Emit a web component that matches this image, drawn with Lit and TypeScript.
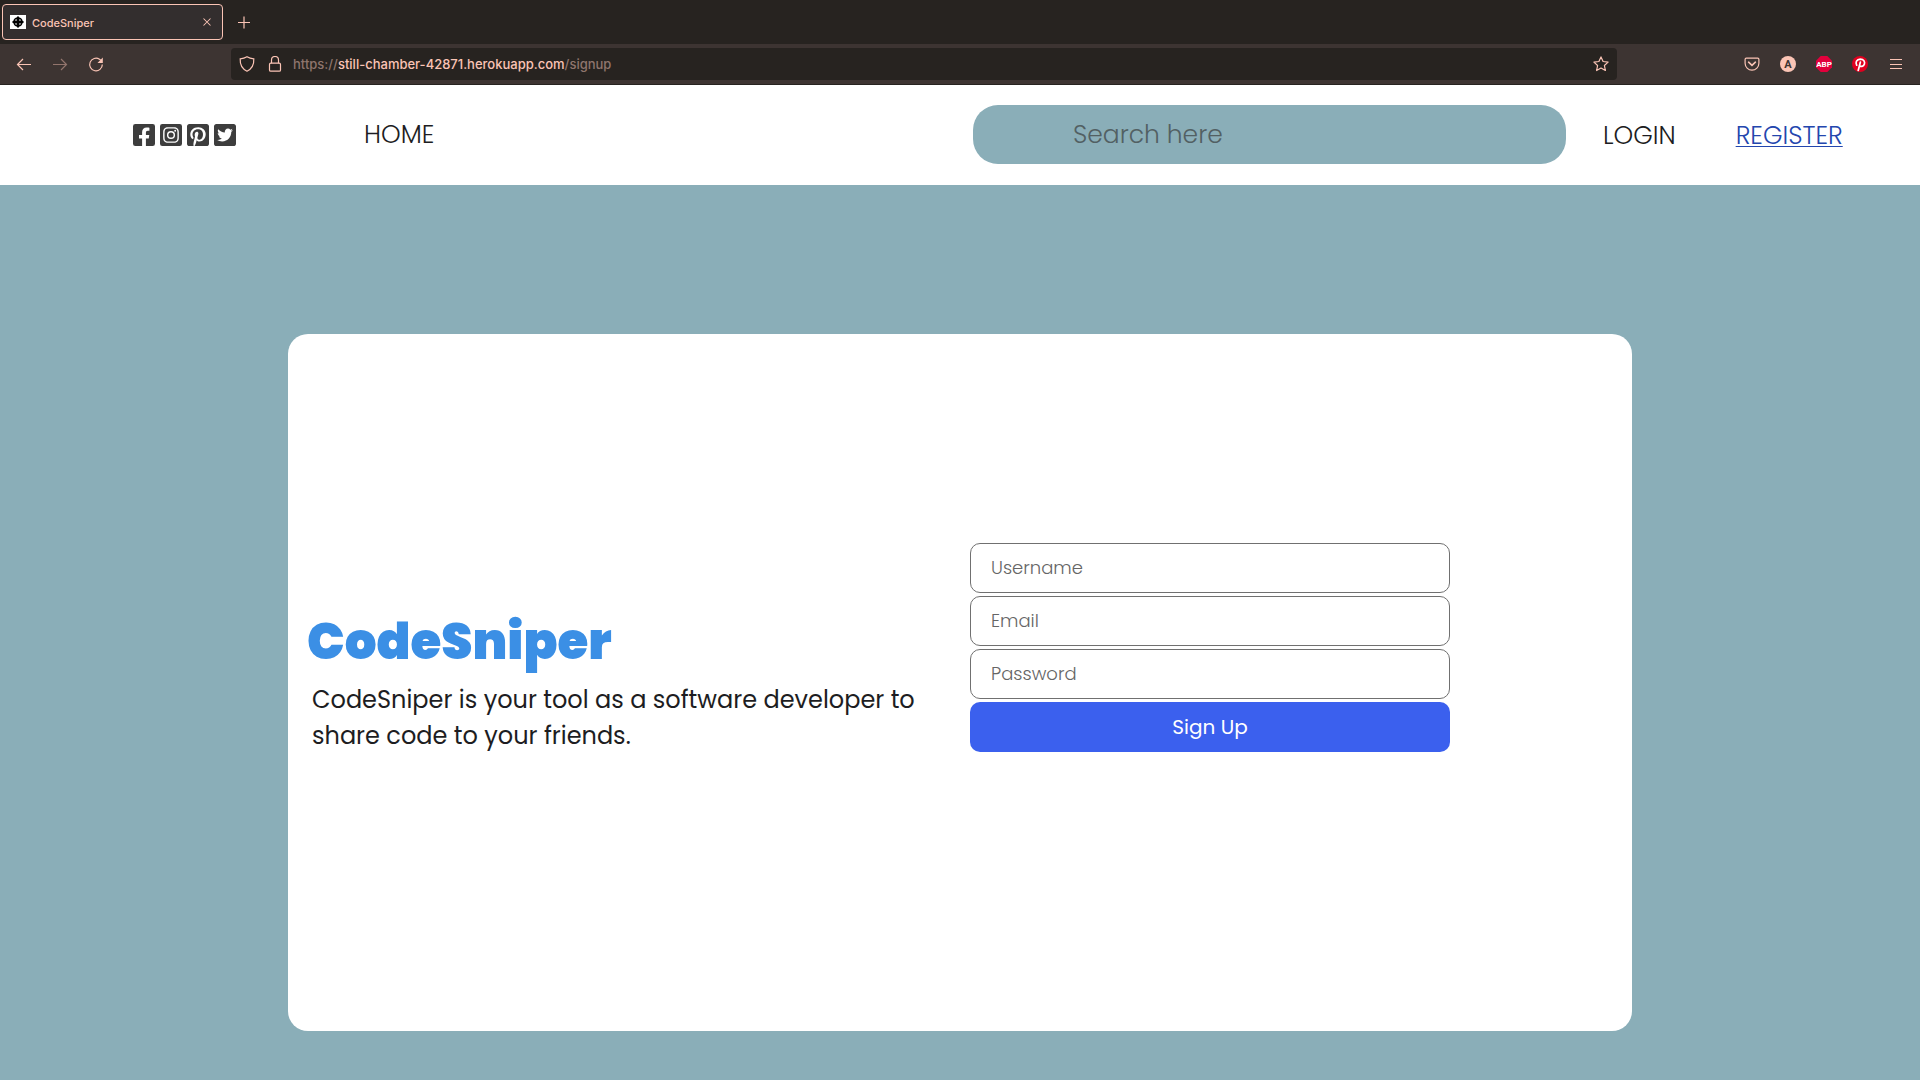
import { LitElement, html, css, svg } from "lit";
import { customElement } from "lit/decorators.js";

const socialIcons = [
  {
    name: "Facebook",
    path: "M400 32H48A48 48 0 0 0 0 80v352a48 48 0 0 0 48 48h137.25V327.69h-63V256h63v-54.64c0-62.15 37-96.48 93.67-96.48 27.14 0 55.52 4.84 55.52 4.84v61h-31.27c-30.81 0-40.42 19.12-40.42 38.73V256h68.78l-11 71.69h-57.78V480H400a48 48 0 0 0 48-48V80a48 48 0 0 0-48-48z",
  },
  {
    name: "Instagram",
    path: "M224,202.66A53.34,53.34,0,1,0,277.36,256,53.38,53.38,0,0,0,224,202.66Zm124.71-41a54,54,0,0,0-30.41-30.41c-21-8.29-71-6.43-94.3-6.43s-73.25-1.93-94.31,6.43a54,54,0,0,0-30.41,30.41c-8.28,21-6.43,71.05-6.43,94.33S91,329.26,99.32,350.33a54,54,0,0,0,30.41,30.41c21,8.29,71,6.43,94.31,6.43s73.24,1.93,94.3-6.43a54,54,0,0,0,30.41-30.41c8.35-21,6.43-71.05,6.43-94.33S357.1,182.74,348.75,161.67ZM224,338a82,82,0,1,1,82-82A81.9,81.9,0,0,1,224,338Zm85.38-148.3a19.14,19.14,0,1,1,19.13-19.14A19.1,19.1,0,0,1,309.42,189.74ZM400,32H48A48,48,0,0,0,0,80V432a48,48,0,0,0,48,48H400a48,48,0,0,0,48-48V80A48,48,0,0,0,400,32ZM382.88,322c-1.29,25.63-7.14,48.34-25.85,67s-41.4,24.63-67,25.85c-26.41,1.49-105.59,1.49-132,0-25.63-1.29-48.26-7.15-67-25.85s-24.63-41.42-25.85-67c-1.49-26.42-1.49-105.61,0-132,1.29-25.63,7.07-48.34,25.85-67s41.47-24.56,67-25.78c26.41-1.49,105.59-1.49,132,0,25.63,1.29,48.33,7.15,67,25.85s24.63,41.42,25.85,67.05C384.37,216.44,384.37,295.56,382.88,322Z",
  },
  {
    name: "Pinterest",
    path: "M448 80v352c0 26.5-21.5 48-48 48H154.4c9.8-16.4 22.4-40 27.4-59.3 3-11.5 15.3-58.4 15.3-58.4 8 15.3 31.4 28.2 56.3 28.2 74.1 0 127.4-68.1 127.4-152.7 0-81.1-66.2-141.8-151.4-141.8-106 0-162.2 71.1-162.2 148.6 0 36 19.2 80.8 49.8 95.1 4.7 2.2 7.1 1.2 8.2-3.3.8-3.4 5-20.1 6.8-27.8.6-2.5.3-4.6-1.7-7-10.1-12.3-18.3-34.9-18.3-56 0-54.2 41-106.6 110.9-106.6 60.3 0 102.6 41.1 102.6 99.9 0 66.4-33.5 112.4-77.2 112.4-24.1 0-42.1-19.9-36.4-44.4 6.9-29.2 20.3-60.7 20.3-81.8 0-53-75.5-45.7-75.5 25 0 21.7 7.3 36.5 7.3 36.5-31.4 132.8-36.1 134.5-29.6 192.6l2.2.8H48c-26.5 0-48-21.5-48-48V80c0-26.5 21.5-48 48-48h352c26.5 0 48 21.5 48 48z",
  },
  {
    name: "Twitter",
    path: "M400 32H48C21.5 32 0 53.5 0 80v352c0 26.5 21.5 48 48 48h352c26.5 0 48-21.5 48-48V80c0-26.5-21.5-48-48-48zm-48.9 158.8c.2 2.8.2 5.7.2 8.5 0 86.7-66 186.6-186.6 186.6-37.2 0-71.7-10.8-100.7-29.4 5.3.6 10.4.8 15.8.8 30.7 0 58.9-10.4 81.4-28-28.8-.6-53-19.5-61.3-45.5 10.1 1.5 19.2 1.5 29.6-1.2-30-6.1-52.5-32.5-52.5-64.4v-.8c8.7 4.9 18.9 7.9 29.6 8.3a65.447 65.447 0 0 1-29.2-54.6c0-12.2 3.2-23.4 8.9-33.1 32.3 39.8 80.8 65.8 135.2 68.6-9.3-44.5 24-80.6 64-80.6 18.9 0 35.9 7.9 47.9 20.7 14.8-2.8 29-8.3 41.6-15.8-4.9 15.2-15.2 28-28.8 36.1 13.2-1.4 26-5.1 37.8-10.2-8.9 13.1-20.1 24.7-32.9 34z",
  },
];

const line = (shape: unknown) => html`<svg
  class="glyph"
  viewBox="0 0 16 16"
  aria-hidden="true"
>${shape}</svg>`;

const glyphs = {
  back: line(svg`<path d="M15 8.500H1.500M7 3 1.500 8.500 7 14"/>`),
  forward: line(svg`<path d="M1 8.500h13.500M9 3l5.500 5.500L9 14"/>`),
  reload: line(svg`<path d="M14.300 8.500A6.300 6.300 0 1 1 11.500 3.300l1.300 1"/><path d="M14.800 1.500V7H9.500z" fill="currentColor" stroke="none"/>`),
  shield: line(svg`<path d="M8 .8c2 1.300 4.200 1.900 6.800 2 .3 5.600-1.300 9.800-6.800 12.400C2.500 12.600.9 8.400 1.200 2.800 3.800 2.700 6 2.100 8 .8z"/>`),
  lock: line(svg`<rect x="2.500" y="7.200" width="11" height="8" rx="1.300"/><path d="M4.500 7.200V4a3.500 3.500 0 0 1 7 0v3.200"/>`),
  star: line(svg`<path d="M8 .9l2.100 4.600 5 .6-3.700 3.400 1 5L8 12l-4.400 2.500 1-5L.9 6.100l5-.6z" stroke-linejoin="round"/>`),
  pocket: line(svg`<path d="M2.300 2.200h11.400c.7 0 1.200.5 1.200 1.200v3.800a6.900 6.900 0 0 1-13.800 0V3.400c0-.7.5-1.200 1.200-1.200z"/><path d="M4.600 6.200 8 9.400l3.400-3.200" stroke-width="1.600" stroke-linecap="round"/>`),
  menu: line(svg`<path d="M2 3.500h12M2 8.500h12M2 12.500h12"/>`),
  plus: line(svg`<path d="M8 2.500v12M2 8.500h12"/>`),
  close: line(svg`<path d="M4 4l8 8M12 4l-8 8"/>`),
};

@customElement("browser-bar")
export class BrowserBar extends LitElement {
  static styles = css`
    :host {
      display: block;
      color: #fbc4b5;
      background: #272320;
      font-family: Inter, "Liberation Sans", sans-serif;
    }
    button {
      display: grid;
      place-items: center;
      padding: 0;
      border: 0;
      background: none;
      color: inherit;
      font: inherit;
    }
    .glyph {
      display: block;
      width: 16px;
      height: 16px;
      fill: none;
      stroke: currentColor;
      stroke-width: 1.2;
    }
    .tabs {
      display: flex;
      align-items: center;
      gap: 3px;
      height: 44px;
      padding: 0 2px;
    }
    .tab {
      display: flex;
      align-items: center;
      gap: 6px;
      box-sizing: border-box;
      width: 221px;
      height: 36px;
      padding: 0 8px 0 7px;
      border: 1px solid #fbc4b5;
      border-radius: 4px;
      background: #332e2e;
      font-size: 11px;
      font-weight: 500;
    }
    .favicon {
      width: 16px;
      height: 14px;
      background: #fff;
    }
    .title {
      flex: 1;
      padding-top: 2px;
    }
    .close .glyph {
      width: 14px;
      height: 14px;
    }
    .new {
      width: 36px;
      height: 36px;
    }
    .toolbar {
      display: flex;
      align-items: center;
      height: 40px;
      padding: 0 6px;
      border-bottom: 1px solid #272320;
      background: #3d3432;
    }
    .tool {
      width: 36px;
      height: 32px;
    }
    .off {
      opacity: 0.45;
    }
    .address {
      display: flex;
      align-items: center;
      flex: 1;
      gap: 10px;
      height: 32px;
      margin: 0 117px;
      padding: 0 8px;
      border-radius: 4px;
      background: #272320;
    }
    .site {
      display: flex;
      gap: 12px;
    }
    .url {
      flex: 1;
      color: #8f756d;
      font-size: 13px;
      font-weight: 500;
      white-space: nowrap;
    }
    .host {
      color: #fbc4b5;
    }
    .badge {
      display: block;
      width: 16px;
      height: 16px;
    }
    .badge-text {
      font-family: Roboto, sans-serif;
      font-weight: 700;
      text-anchor: middle;
    }
  `;

  render() {
    return html`
      <div class="tabs">
        <div class="tab">
          <svg class="favicon" viewBox="0 0 16 14" aria-hidden="true">
            <circle cx="8" cy="7" r="4" fill="#555" stroke="#000" stroke-width="1.600" />
            <path d="M8 1.500v11M2.500 7h11" stroke="#000" stroke-width="2" />
            <path d="M5.500 4.500h1v1h-1zM9.500 4.500h1v1h-1zM5.500 8.500h1v1h-1zM9.500 8.500h1v1h-1z" fill="#fff" />
          </svg>
          <span class="title">CodeSniper</span>
          <button class="close" aria-label="Close tab">${glyphs.close}</button>
        </div>
        <button class="new" aria-label="New tab">${glyphs.plus}</button>
      </div>
      <div class="toolbar">
        <button class="tool" aria-label="Back">${glyphs.back}</button>
        <button class="tool off" aria-label="Forward">${glyphs.forward}</button>
        <button class="tool" aria-label="Reload">${glyphs.reload}</button>
        <div class="address">
          <div class="site">
            <button aria-label="Tracking protection">${glyphs.shield}</button>
            <button aria-label="Site information">${glyphs.lock}</button>
          </div>
          <span class="url">https://<span class="host">still-chamber-42871.herokuapp.com</span>/signup</span>
          <button aria-label="Bookmark">${glyphs.star}</button>
        </div>
        <button class="tool" aria-label="Pocket">${glyphs.pocket}</button>
        <button class="tool" aria-label="Account">
          <svg class="badge" viewBox="0 0 16 16">
            <circle cx="8" cy="8" r="8" fill="#fbc4b5" />
            <text class="badge-text" x="8" y="12" font-size="11" fill="#3d3432">A</text>
          </svg>
        </button>
        <button class="tool" aria-label="Ad blocker">
          <svg class="badge" viewBox="0 0 16 16">
            <path d="M4.700 0h6.600L16 4.700v6.600L11.300 16H4.700L0 11.300V4.700z" fill="#e2003c" />
            <text class="badge-text" x="8" y="11" font-size="8" fill="#fff">ABP</text>
          </svg>
        </button>
        <button class="tool" aria-label="Pinterest">
          <svg class="badge" viewBox="0 0 16 16">
            <circle cx="8" cy="8" r="8" fill="#e0001f" />
            <path
              d="M4.700 9.200C3.100 6.600 4.600 3.200 8.300 3.100c3.500 0 4.800 2.500 4.100 4.900-.8 2.700-4 3.200-4.900 1.300M8.400 6 6.200 14.500"
              fill="none" stroke="#fff" stroke-width="1.700" stroke-linecap="round" />
          </svg>
        </button>
        <button class="tool" aria-label="Menu">${glyphs.menu}</button>
      </div>
    `;
  }
}

@customElement("site-header")
export class SiteHeader extends LitElement {
  static styles = css`
    :host {
      display: grid;
      grid-template-columns: 364px 1fr 593px 354px;
      align-items: center;
      box-sizing: border-box;
      height: 100px;
      padding-bottom: 1px;
      background: #fff;
      color: #1d1d22;
      font-family: Poppins, Inter, "Liberation Sans", sans-serif;
      font-size: 25px;
      font-weight: 300;
    }
    a {
      color: inherit;
      text-decoration: none;
    }
    .social {
      display: flex;
      gap: 5px;
      padding-left: 133px;
    }
    .social svg {
      display: block;
      width: 22px;
      height: 22px;
      fill: #3d3d3d;
    }
    .search {
      box-sizing: border-box;
      width: 100%;
      height: 59px;
      padding: 0 100px;
      border: 0;
      border-radius: 25px;
      background: #8aaeb8;
      font: inherit;
    }
    .search::placeholder {
      color: #526063;
      opacity: 1;
    }
    .account {
      display: flex;
      gap: 60px;
      padding: 3px 0 0 37px;
    }
    .account .current {
      color: #2346ae;
      text-decoration: underline;
      text-decoration-thickness: 1px;
      text-underline-offset: 2px;
    }
  `;

  render() {
    return html`
      <div class="social">
        ${socialIcons.map(
          (icon) => html`<a href="#" aria-label=${icon.name}>
            <svg viewBox="0 32 448 448"><path d=${icon.path} /></svg>
          </a>`
        )}
      </div>
      <nav><a href="#">HOME</a></nav>
      <input class="search" type="search" placeholder="Search here" aria-label="Search here" />
      <nav class="account">
        <a href="#">LOGIN</a>
        <a class="current" href="#">REGISTER</a>
      </nav>
    `;
  }
}

@customElement("signup-card")
export class SignupCard extends LitElement {
  static styles = css`
    :host {
      display: grid;
      grid-template-columns: 1fr 1fr;
      align-items: start;
      background: #fff;
      border-radius: 20px;
      color: #1d1d22;
      font-family: Poppins, Inter, "Liberation Sans", sans-serif;
    }
    .intro {
      padding: 276px 19px 20px;
    }
    h1 {
      margin: 0;
      color: #3b8fe5;
      font-size: 50px;
      font-weight: 900;
      line-height: 64px;
    }
    p {
      margin: 8px 5px 0;
      font-size: 24px;
      line-height: 36px;
    }
    form {
      display: grid;
      gap: 3px;
      max-width: 480px;
      padding: 209px 20px 20px 10px;
    }
    input,
    button {
      box-sizing: border-box;
      width: 100%;
      height: 50px;
      border-radius: 10px;
      font-family: inherit;
    }
    input {
      padding: 0 20px 2px;
      border: 1px solid #707070;
      font-size: 18px;
      font-weight: 300;
    }
    input::placeholder {
      color: #666;
      opacity: 1;
    }
    button {
      border: 0;
      background: #3b60ee;
      color: #fff;
      font-size: 20px;
    }
  `;

  render() {
    return html`
      <section class="intro">
        <h1>CodeSniper</h1>
        <p>CodeSniper is your tool as a software developer to share code to your friends.</p>
      </section>
      <form @submit=${(e: Event) => e.preventDefault()}>
        <input type="text" placeholder="Username" aria-label="Username" />
        <input type="email" placeholder="Email" aria-label="Email" />
        <input type="password" placeholder="Password" aria-label="Password" />
        <button type="submit">Sign Up</button>
      </form>
    `;
  }
}

@customElement("app-root")
export class AppRoot extends LitElement {
  static styles = css`
    :host {
      display: flex;
      flex-direction: column;
      min-height: 100vh;
      background: #8aaeb8;
    }
    main {
      display: flex;
      flex: 1;
      padding: 149px 15% 49px;
    }
    signup-card {
      flex: 1;
    }
  `;

  render() {
    return html`
      <browser-bar></browser-bar>
      <site-header></site-header>
      <main><signup-card></signup-card></main>
    `;
  }
}
